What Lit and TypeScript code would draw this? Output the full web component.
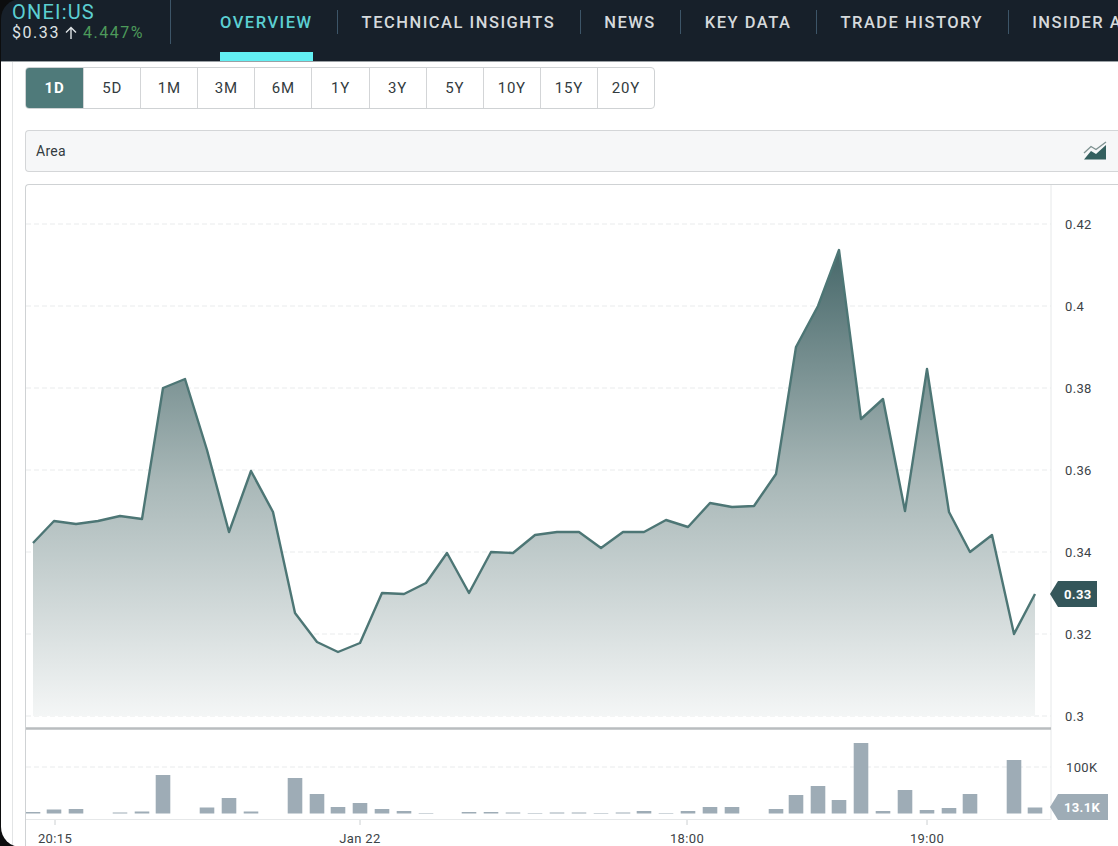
import { LitElement, html, css, svg } from "lit";
import { customElement } from "lit/decorators.js";

const LINE: [number, number][] = [[33,543],[54,521],[76,524],[98,521],[120,516],[142,519],[163,388],[185,379],[207,450],[229,532],[251,471],[273,512],[295,613],[317,642],[338,652],[360,643],[382,593],[404,594],[426,583],[447,553],[469,593],[491,552],[513,553],[535,535],[557,532],[579,532],[601,548],[623,532],[644,532],[666,520],[688,527],[710,503],[732,507],[754,506],[776,474],[796,347],[818,306],[839,250],[861,419],[883,399],[905,511],[927,369],[949,512],[970,552],[992,535],[1014,634],[1035,594]];
const VOL = [812,809.5,809,814,812.5,811.5,775,814,807.5,798,811.5,814,778,794,807,803,809,811,813,814,812,812,812.5,813,812.5,812.5,813,812.5,811,813,811,807,807,814,809,795,786,800,743,811,790,810,808,794,813.5,760,807.5];
const PRICE = [[224,"0.42"],[306,"0.4"],[388,"0.38"],[470,"0.36"],[552,"0.34"],[634,"0.32"],[716,"0.3"]] as const;
const RANGES = ["1D","5D","1M","3M","6M","1Y","3Y","5Y","10Y","15Y","20Y"];
const TABS = ["OVERVIEW","TECHNICAL INSIGHTS","NEWS","KEY DATA","TRADE HISTORY","INSIDER ACTIVITY"];

@customElement("app-root")
export class AppRoot extends LitElement {
  static styles = css`
    :host { display: block; width: 1118px; height: 846px; overflow: hidden; position: relative; background: #fff; font-family: Roboto, "Liberation Sans", sans-serif; }
    .page { display: flex; flex-direction: column; height: 846px; }
    .nav { display: flex; flex: none; height: 61px; background: #17202a; border-bottom: 1px solid #9aa0a4; box-sizing: content-box; overflow: hidden; }
    .ticker { flex: none; width: 158px; height: 44px; padding-left: 12px; border-right: 1px solid #3d5568; box-sizing: content-box; }
    .symbol { color: #5ccfd2; font-size: 20px; line-height: 20px; letter-spacing: 1.2px; margin-top: 2px; }
    .quote { display: flex; align-items: center; color: #dfe3e5; font-size: 16px; line-height: 20px; letter-spacing: 1.55px; margin-top: 1px; white-space: nowrap; }
    .quote svg { display: block; width: 14px; height: 14px; margin: 0 5px 0 4px; }
    .up { color: #4d9a5a; }
    .tabs { display: flex; align-items: flex-start; margin-left: 24.5px; }
    .tab { flex: none; position: relative; height: 61px; padding: 0 24.5px; color: #d5d9dc; font-size: 16.5px; font-weight: 500; line-height: 45px; letter-spacing: 1.5px; white-space: nowrap; }
    .tab + .tab::before { content: ""; position: absolute; left: 0; top: 10px; height: 24px; width: 1px; background: #3d5568; }
    .tab.active { color: #5ccfd2; }
    .tab.active::after { content: ""; position: absolute; left: 24.5px; right: 24.5px; bottom: 0; height: 9px; background: #62f0f3; }
    .body { flex: 1; min-height: 0; margin-left: 12px; border-left: 1px solid #e2e4e5; padding: 5px 0 0 12px; display: flex; flex-direction: column; }
    .ranges { display: flex; align-self: flex-start; height: 42px; border: 1px solid #cfd2d4; border-radius: 4px; overflow: hidden; box-sizing: border-box; }
    .range { width: 57.1px; display: flex; align-items: center; justify-content: center; font-size: 15px; letter-spacing: .8px; color: #333b40; border-left: 1px solid #d3d5d7; box-sizing: border-box; }
    .range:first-child { border-left: 0; }
    .range.active { background: #4f7a7a; color: #fff; font-weight: 700; }
    .select { flex: none; display: flex; align-items: center; justify-content: space-between; height: 42px; margin-top: 21px; padding: 0 10px 0 10px; background: #f6f7f8; border: 1px solid #d4d6d8; border-right: 0; border-radius: 4px 0 0 4px; box-sizing: border-box; font-size: 14px; letter-spacing: .3px; color: #333b40; }
    .select svg { display: block; width: 25px; height: 20px; }
    .panel { flex: 1; min-height: 0; margin-top: 12px; border: 1px solid #cfd2d4; border-right: 0; border-bottom: 0; border-radius: 4px 0 0 0; overflow: hidden; }
    .chart { display: block; }
    .chart text { font-family: Roboto, "Liberation Sans", sans-serif; font-size: 13px; fill: #3c4347; letter-spacing: .35px; }
    .chart text.tag { fill: #fff; font-weight: 700; }
    .frame { position: absolute; inset: -1px -40px -1px 1px; border-radius: 20px; box-shadow: 0 0 0 40px #0c0d0e; pointer-events: none; }
  `;

  private chart() {
    const pts = LINE.map((p) => p.join(",")).join(" ");
    const area = `33,716 ${pts} 1035,716`;
    return svg`
      <defs>
        <linearGradient id="fill" gradientUnits="userSpaceOnUse" x1="0" y1="250" x2="0" y2="716">
          <stop offset="0" stop-color="#47686a"/>
          <stop offset=".5" stop-color="#a9b8b8"/>
          <stop offset="1" stop-color="#f4f6f6"/>
        </linearGradient>
      </defs>
      ${PRICE.map(([y]) => svg`<line x1="26" x2="1051" y1=${y} y2=${y} stroke="#e9ebec" stroke-dasharray="5 3"/>`)}
      <polygon points=${area} fill="url(#fill)"/>
      <polyline points=${pts} fill="none" stroke="#4d7675" stroke-width="2.4" stroke-linejoin="round"/>
      <line x1="1051" x2="1051" y1="185" y2="820" stroke="#e6e8e9"/>
      <line x1="26" x2="1051" y1="728.5" y2="728.5" stroke="#b9bdbf" stroke-width="2.4"/>
      <line x1="26" x2="1051" y1="767" y2="767" stroke="#e9ebec" stroke-dasharray="5 3"/>
      <line x1="26" x2="1051" y1="819.5" y2="819.5" stroke="#e6e8e9"/>
      ${VOL.map((top, i) => {
        const cx = LINE[i][0];
        const x = Math.max(26, cx - 7.3);
        return svg`<rect x=${x} y=${top} width=${cx + 7.3 - x} height=${813.5 - top} fill="#9eacb6"/>`;
      })}
      ${PRICE.map(([y, t]) => svg`<text x="1065" y=${y + 4.5}>${t}</text>`)}
      <text x="1066" y="771.5">100K</text>
      <polygon points="1050,594 1058,581 1097,581 1097,607 1058,607" fill="#34565a"/>
      <text class="tag" x="1064" y="598.5">0.33</text>
      <polygon points="1050,807 1058,794 1108,794 1108,820 1058,820" fill="#9eacb6"/>
      <text class="tag" x="1064" y="811.5">13.1K</text>
      <line x1="55" x2="55" y1="820" y2="825" stroke="#ccd0d2"/>
      <line x1="360" x2="360" y1="820" y2="825" stroke="#ccd0d2"/>
      <line x1="687" x2="687" y1="820" y2="825" stroke="#ccd0d2"/>
      <line x1="927" x2="927" y1="820" y2="825" stroke="#ccd0d2"/>
      <text x="55" y="843" text-anchor="middle">20:15</text>
      <text x="360" y="843" text-anchor="middle">Jan 22</text>
      <text x="687" y="843" text-anchor="middle">18:00</text>
      <text x="927" y="843" text-anchor="middle">19:00</text>
    `;
  }

  render() {
    return html`
      <div class="page">
        <header class="nav">
          <div class="ticker">
            <div class="symbol">ONEI:US</div>
            <div class="quote">$0.33<svg viewBox="0 0 14 14"><path d="M7 13 V1.5 M2 6.5 L7 1.5 L12 6.5" fill="none" stroke="#dfe3e5" stroke-width="1.4"/></svg><span class="up">4.447%</span></div>
          </div>
          <nav class="tabs">
            ${TABS.map((t, i) => html`<div class="tab ${i === 0 ? "active" : ""}">${t}</div>`)}
          </nav>
        </header>
        <main class="body">
          <div class="ranges">
            ${RANGES.map((r, i) => html`<div class="range ${i === 0 ? "active" : ""}">${r}</div>`)}
          </div>
          <div class="select">
            <span>Area</span>
            <svg viewBox="0 0 25 20">
              <path d="M1 18.5 L8 10 L13 13 L23 4 V18.5 Z" fill="#34605f"/>
              <path d="M1 12 L8 5.5 L13 8.5 L23 1" fill="none" stroke="#7d9190" stroke-width="1.3"/>
            </svg>
          </div>
          <section class="panel">
            <svg class="chart" width="1092" height="661" viewBox="26 185 1092 661">${this.chart()}</svg>
          </section>
        </main>
      </div>
      <div class="frame"></div>
    `;
  }
}
